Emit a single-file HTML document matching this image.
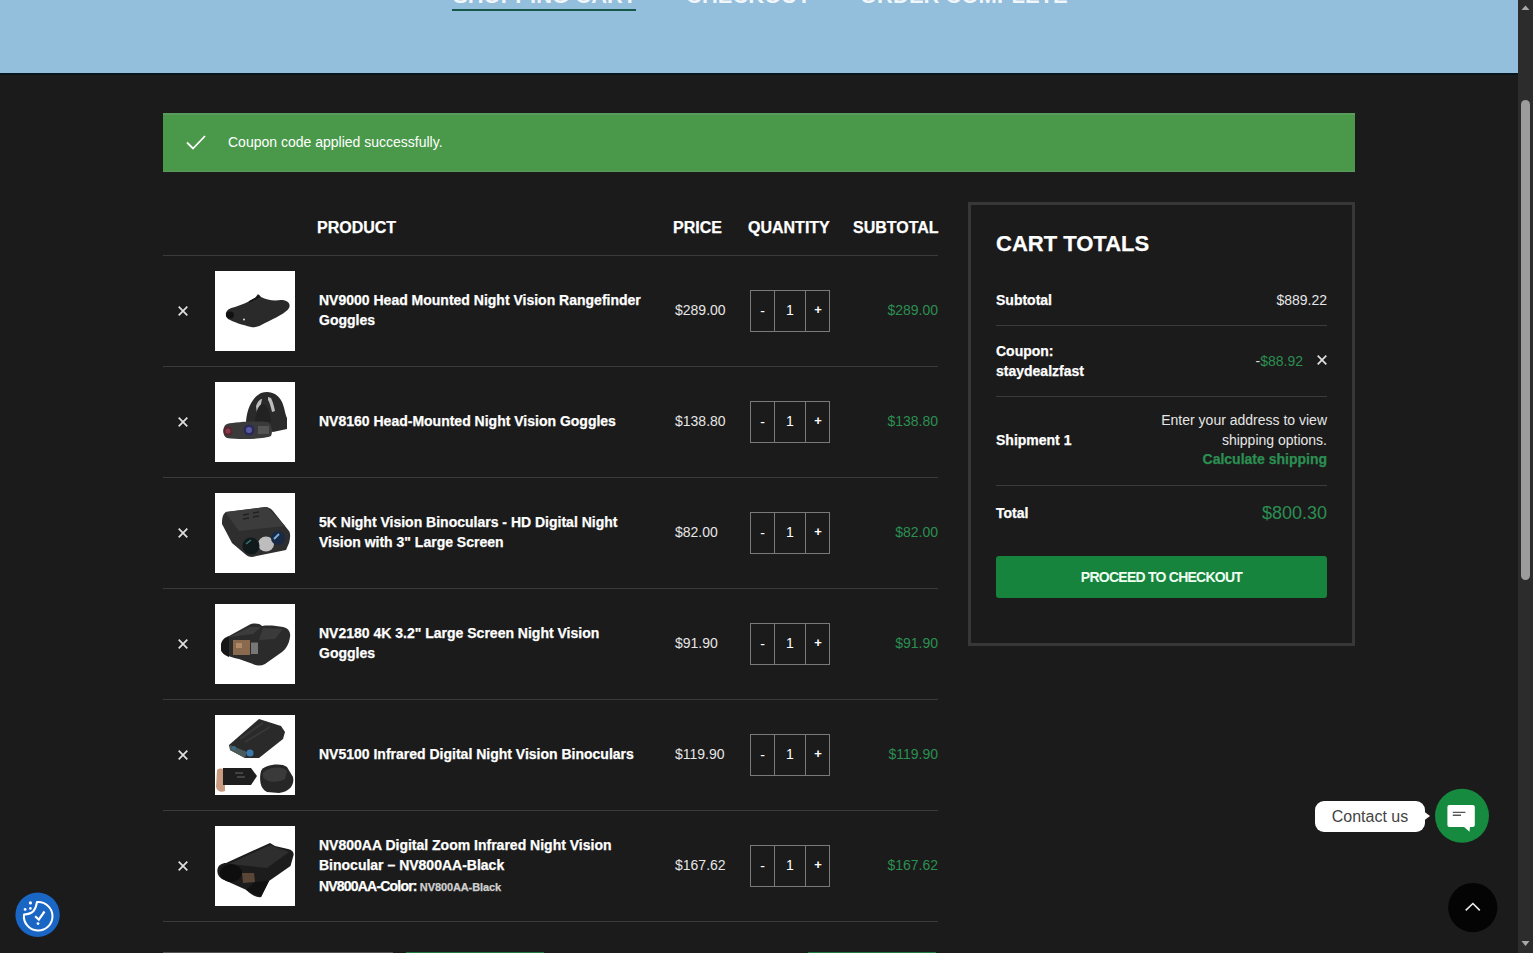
<!DOCTYPE html>
<html><head><meta charset="utf-8">
<style>
*{box-sizing:border-box;margin:0;padding:0}
html,body{width:1533px;height:953px;overflow:hidden}
body{background:#1b1b1b;font-family:"Liberation Sans",sans-serif;color:#fff;position:relative}
.abs{position:absolute}
.th,.row .name,.b{-webkit-text-stroke:0.25px currentColor}
#hdr{left:0;top:0;width:1518px;height:73px;background:#93bedc;overflow:hidden}
#hdr .st{position:absolute;top:-14px;font-size:22px;font-weight:bold;color:rgba(255,255,255,0.88);line-height:20px;white-space:nowrap}
#notice{left:163px;top:113px;width:1192px;height:59px;background:#4a994a;border-top:2px solid #5a9c5c;border-bottom:1px solid #5a9a5c}
#notice .txt{position:absolute;left:65px;top:17px;font-size:14px;line-height:20px;color:#fff}
.th{position:absolute;top:218px;font-size:16px;font-weight:bold;line-height:20px;white-space:nowrap}
.hl{position:absolute;left:163px;width:775px;height:1px;background:#3b3b3b}
.row{position:absolute;left:163px;width:775px;height:110px}
.row .x{position:absolute;left:14px;top:50px;width:12px;height:12px}
.row .img{position:absolute;left:52px;top:16px;width:80px;height:80px;background:#fff;overflow:hidden}
.row .name{position:absolute;left:156px;top:55px;transform:translateY(-50%);font-size:14px;font-weight:bold;line-height:20px;width:340px}
.row .price{position:absolute;left:512px;top:45px;font-size:14px;line-height:20px;color:#e6e6e6}
.row .qty{position:absolute;left:587px;top:35px;width:80px;height:42px;border:1px solid #7a7a7a}
.qty .d1{position:absolute;left:23px;top:0;width:1px;height:40px;background:#7a7a7a}
.qty .d2{position:absolute;left:54px;top:0;width:1px;height:40px;background:#7a7a7a}
.qty span{position:absolute;top:9px;font-size:14px;line-height:20px;text-align:center}
.row .sub{position:absolute;right:0;top:45px;font-size:14px;line-height:20px;color:#2b8f52}
#tot{left:968px;top:202px;width:387px;height:444px;border:3px solid #373737}
.tl{position:absolute;font-size:14px;line-height:20px;white-space:nowrap}
.b{font-weight:bold}
.g{color:#2b8f52}
.tline{position:absolute;left:996px;width:331px;height:1px;background:#3b3b3b}
#btn{left:996px;top:556px;width:331px;height:42px;background:#16843c;border-radius:3px;font-size:14px;font-weight:bold;letter-spacing:-0.75px;line-height:42px;text-align:center;color:#eefff2}
#contact{left:1315px;top:801px;width:110px;height:31px;background:#fff;border-radius:9px;color:#444;font-size:16px;line-height:31px;text-align:center}
#chat{left:1435px;top:789px;width:54px;height:54px;border-radius:50%;background:#168b3f}
#totop{left:1448px;top:883px;width:50px;height:50px;border-radius:50%;background:#050505}
#cookie{left:15px;top:893px;width:45px;height:45px;border-radius:50%;background:#1e69c2}
#sb{left:1518px;top:0;width:15px;height:953px;background:#2c2c2c}
#thumb{left:1521px;top:100px;width:9px;height:480px;background:#9c9c9c;border-radius:5px}
</style></head>
<body>
<div id="hdr" class="abs">
  <div class="st" style="left:453px">SHOPPING CART</div>
  <div class="st" style="left:686px">CHECKOUT</div>
  <div class="st" style="left:860px">ORDER COMPLETE</div>
  <div class="abs" style="left:452px;top:9px;width:184px;height:2px;background:#17574a"></div>
</div>

<div class="abs" style="left:0;top:73px;width:1518px;height:2px;background:#06161c"></div>
<div id="notice" class="abs">
  <svg class="abs" style="left:22px;top:19px" width="22" height="17" viewBox="0 0 22 17"><path d="M2 8.5 L8 14.5 L20 2" fill="none" stroke="#fff" stroke-width="1.8"/></svg>
  <div class="txt">Coupon code applied successfully.</div>
</div>

<div class="th" style="left:317px">PRODUCT</div>
<div class="th" style="left:673px">PRICE</div>
<div class="th" style="left:748px">QUANTITY</div>
<div class="th" style="left:853px">SUBTOTAL</div>

<div class="hl" style="top:255px"></div>
<div class="hl" style="top:366px"></div>
<div class="hl" style="top:477px"></div>
<div class="hl" style="top:588px"></div>
<div class="hl" style="top:699px"></div>
<div class="hl" style="top:810px"></div>
<div class="hl" style="top:921px"></div>

<!-- ROWS -->
<div class="row" style="top:255px">
  <svg class="x" viewBox="0 0 12 12"><path d="M1.7 1.7L10.3 10.3M10.3 1.7L1.7 10.3" stroke="#e0e0e0" stroke-width="1.7"/></svg>
  <div class="img"><svg width="80" height="80" viewBox="0 0 80 80"><rect width="80" height="80" fill="#fff"/>
<path d="M11 45 C10 40 14 37 20 36 C26 34 34 31 40 27 L43 23 L46 26 C52 29 58 30 66 29 C73 29 76 33 74 37 C71 42 60 47 50 52 C45 55 40 57 36 56 C28 54 18 51 13 48 Z" fill="#2a2a2a"/>
<path d="M34 31 L45 25" stroke="#111" stroke-width="1.5"/>
<ellipse cx="15" cy="44" rx="4" ry="3.5" fill="#111"/>
<circle cx="29" cy="48.5" r="1" fill="#ddd"/></svg></div>
  <div class="name">NV9000 Head Mounted Night Vision Rangefinder Goggles</div>
  <div class="price">$289.00</div>
  <div class="qty"><i class="d1"></i><i class="d2"></i><span style="left:0;width:23px;top:10px">-</span><span style="left:24px;width:30px">1</span><span style="left:55px;width:24px;font-size:13px;font-weight:bold">+</span></div>
  <div class="sub">$289.00</div>
</div>
<div class="row" style="top:366px">
  <svg class="x" viewBox="0 0 12 12"><path d="M1.7 1.7L10.3 10.3M10.3 1.7L1.7 10.3" stroke="#e0e0e0" stroke-width="1.7"/></svg>
  <div class="img"><svg width="80" height="80" viewBox="0 0 80 80"><rect width="80" height="80" fill="#fff"/>
<path d="M31 42 C31 30 36 16 46 11 C54 8 63 11 67 20 C70 27 70 32 72 36 L72 47 L58 50 Z" fill="#2a2a2a"/>
<path d="M41 24 C43 19 45 17 47 17 L45 27 C44 28 43 30 42 32 Z M53 15 L56 16 C58 20 59 24 60 29 L57 30 C56 26 55 21 53 18 Z" fill="#bdbdbd"/>
<path d="M47 22 C52 22 55 30 56 40 L40 41 C40 32 43 23 47 22 Z" fill="#222"/>
<path d="M12 42 C20 40 40 39 52 40 C57 41 58 50 56 54 C50 57 25 58 12 56 C7 54 7 44 12 42 Z" fill="#3a3a3a"/>
<circle cx="13" cy="49" r="4.5" fill="#5a2430"/><circle cx="13" cy="49" r="2.5" fill="#8a3a4a"/>
<circle cx="34" cy="48" r="5.5" fill="#2a2a5a"/><circle cx="34" cy="48" r="3" fill="#5a5aa0"/>
<rect x="43" y="44" width="11" height="8" fill="#555"/></svg></div>
  <div class="name">NV8160 Head-Mounted Night Vision Goggles</div>
  <div class="price">$138.80</div>
  <div class="qty"><i class="d1"></i><i class="d2"></i><span style="left:0;width:23px;top:10px">-</span><span style="left:24px;width:30px">1</span><span style="left:55px;width:24px;font-size:13px;font-weight:bold">+</span></div>
  <div class="sub">$138.80</div>
</div>
<div class="row" style="top:477px">
  <svg class="x" viewBox="0 0 12 12"><path d="M1.7 1.7L10.3 10.3M10.3 1.7L1.7 10.3" stroke="#e0e0e0" stroke-width="1.7"/></svg>
  <div class="img"><svg width="80" height="80" viewBox="0 0 80 80"><rect width="80" height="80" fill="#fff"/>
<path d="M7 31 C7 24 8 20 12 19 L50 14 C54 14 56 16 58 18 L74 38 C76 41 75 46 74 50 L71 57 L37 64 C34 64 32 63 30 61 L17 50 Z" fill="#2e2e2e"/>
<path d="M10 19 L52 14 L70 33 L24 38 Z" fill="#3c3c3c"/>
<path d="M28 22 L34 21 M38 20 L44 19 M28 26 L34 25 M38 24 L44 23" stroke="#222" stroke-width="1.5"/>
<ellipse cx="51" cy="51" rx="8" ry="7.5" fill="#bdbdbd"/>
<circle cx="36" cy="53" r="8.5" fill="#111a1a"/><path d="M31 51 L36 47" stroke="#3a7a7a" stroke-width="1.5"/>
<circle cx="63" cy="45" r="7" fill="#1a2a45"/><path d="M59 46 L64 41" stroke="#7ab0e0" stroke-width="1.8"/></svg></div>
  <div class="name">5K Night Vision Binoculars - HD Digital Night Vision with 3" Large Screen</div>
  <div class="price">$82.00</div>
  <div class="qty"><i class="d1"></i><i class="d2"></i><span style="left:0;width:23px;top:10px">-</span><span style="left:24px;width:30px">1</span><span style="left:55px;width:24px;font-size:13px;font-weight:bold">+</span></div>
  <div class="sub">$82.00</div>
</div>
<div class="row" style="top:588px">
  <svg class="x" viewBox="0 0 12 12"><path d="M1.7 1.7L10.3 10.3M10.3 1.7L1.7 10.3" stroke="#e0e0e0" stroke-width="1.7"/></svg>
  <div class="img"><svg width="80" height="80" viewBox="0 0 80 80"><rect width="80" height="80" fill="#fff"/>
<path d="M6 42 C6 36 10 33 14 32 L34 21 C38 19 44 19 47 22 C54 21 62 22 68 23 C73 24 76 28 75 33 C74 40 71 45 67 48 L50 60 C46 62 42 62 38 60 L24 55 C14 53 7 50 6 46 Z" fill="#2b2b2b"/>
<path d="M14 33 L35 23 L46 23 L38 30 Z" fill="#3c3c3c"/>
<path d="M48 24 L68 25 L60 35 L44 36 Z" fill="#3a3a3a"/>
<path d="M6 42 C6 37 10 34 14 33 L14 53 C9 51 6 48 6 45 Z" fill="#161616"/>
<rect x="18" y="36" width="17" height="15" fill="#8a6a4e"/>
<rect x="21" y="39" width="6" height="5" fill="#b08a66"/>
<rect x="36" y="38.5" width="7" height="11.5" fill="#777"/></svg></div>
  <div class="name">NV2180 4K 3.2" Large Screen Night Vision Goggles</div>
  <div class="price">$91.90</div>
  <div class="qty"><i class="d1"></i><i class="d2"></i><span style="left:0;width:23px;top:10px">-</span><span style="left:24px;width:30px">1</span><span style="left:55px;width:24px;font-size:13px;font-weight:bold">+</span></div>
  <div class="sub">$91.90</div>
</div>
<div class="row" style="top:699px">
  <svg class="x" viewBox="0 0 12 12"><path d="M1.7 1.7L10.3 10.3M10.3 1.7L1.7 10.3" stroke="#e0e0e0" stroke-width="1.7"/></svg>
  <div class="img"><svg width="80" height="80" viewBox="0 0 80 80"><rect width="80" height="80" fill="#fff"/>
<path d="M14 30 L44 4 L66 11 L70 17 L68 24 L44 43 L30 43 L15 35 Z" fill="#2a2a2a"/>
<path d="M15 30 L32 37 L30 43 L15 35 Z" fill="#4a5a5a"/>
<path d="M25 24 L48 8 M30 27 L55 12" stroke="#383838" stroke-width="2"/>
<circle cx="35" cy="38" r="3.5" fill="#3a7ab0"/><circle cx="19" cy="33" r="2" fill="#3a6a8a"/>
<path d="M2 55 C6 52 10 54 10 58 L10 76 C6 78 2 76 1 72 Z" fill="#c89a80"/>
<path d="M8 53 L36 53 L42 61 L36 70 L8 70 Z" fill="#1e1e1e"/>
<path d="M20 58 L28 58 M22 62 L30 62" stroke="#666" stroke-width="1"/>
<path d="M46 56 C48 50 66 47 72 52 L78 62 C80 70 74 77 64 78 L52 77 C45 74 44 64 46 56 Z" fill="#262626"/>
<path d="M48 58 C52 52 68 50 72 56 L70 64 C64 68 52 68 48 62 Z" fill="#3a3a3a"/></svg></div>
  <div class="name">NV5100 Infrared Digital Night Vision Binoculars</div>
  <div class="price">$119.90</div>
  <div class="qty"><i class="d1"></i><i class="d2"></i><span style="left:0;width:23px;top:10px">-</span><span style="left:24px;width:30px">1</span><span style="left:55px;width:24px;font-size:13px;font-weight:bold">+</span></div>
  <div class="sub">$119.90</div>
</div>
<div class="row" style="top:810px">
  <svg class="x" viewBox="0 0 12 12"><path d="M1.7 1.7L10.3 10.3M10.3 1.7L1.7 10.3" stroke="#e0e0e0" stroke-width="1.7"/></svg>
  <div class="img"><svg width="80" height="80" viewBox="0 0 80 80"><rect width="80" height="80" fill="#fff"/>
<path d="M2.4 44 C3 39 7 37 11 37 L55 17 L60 20 L73 23 C77 24 79 26 78.6 29 L75.5 40 L54 55 L46 71 C42 72 36 69 31.5 64 L7 53 C4 51 2 48 2.4 44 Z" fill="#1c1c1c"/>
<path d="M14 38 L55 19 L74 26 L52 42 Z" fill="#2e2e2e"/>
<ellipse cx="16" cy="47" rx="11" ry="9" fill="#0e0e0e"/>
<path d="M27 47 L39 47 L40 56 L28 57 Z" fill="#5a4636"/>
<path d="M31 64 L46 71 L54 55 L40 56 Z" fill="#111"/></svg></div>
  <div class="name" style="top:25px;transform:none">NV800AA Digital Zoom Infrared Night Vision Binocular – NV800AA-Black<div style="margin-top:1px;letter-spacing:-0.8px">NV800AA-Color: <span style="font-size:11px;color:#cfcfcf;letter-spacing:-0.1px">NV800AA-Black</span></div></div>
  <div class="price">$167.62</div>
  <div class="qty"><i class="d1"></i><i class="d2"></i><span style="left:0;width:23px;top:10px">-</span><span style="left:24px;width:30px">1</span><span style="left:55px;width:24px;font-size:13px;font-weight:bold">+</span></div>
  <div class="sub">$167.62</div>
</div>

<!-- bottom hints -->
<div class="abs" style="left:163px;top:952px;width:230px;height:1px;background:#555"></div>
<div class="abs" style="left:406px;top:952px;width:138px;height:1px;background:#1f7a3e"></div>
<div class="abs" style="left:808px;top:952px;width:128px;height:1px;background:#1f7a3e"></div>

<!-- TOTALS -->
<div id="tot" class="abs"></div>
<div class="abs b" style="left:996px;top:230px;font-size:22px;line-height:28px">CART TOTALS</div>

<div class="tl b" style="left:996px;top:290px">Subtotal</div>
<div class="tl" style="right:206px;top:290px;color:#e6e6e6">$889.22</div>
<div class="tline" style="top:325px"></div>

<div class="tl b" style="left:996px;top:341px">Coupon:<br>staydealzfast</div>
<div class="tl g" style="right:230px;top:351px"><span style="color:#ddd">-</span>$88.92</div>
<svg class="abs" style="left:1316px;top:354px" width="12" height="12" viewBox="0 0 12 12"><path d="M1.7 1.7L10.3 10.3M10.3 1.7L1.7 10.3" stroke="#e0e0e0" stroke-width="1.7"/></svg>
<div class="tline" style="top:396px"></div>

<div class="tl b" style="left:996px;top:430px">Shipment 1</div>
<div class="tl" style="right:206px;top:410px;text-align:right;color:#e6e6e6">Enter your address to view<br>shipping options.</div>
<div class="tl b g" style="right:206px;top:449px">Calculate shipping</div>
<div class="tline" style="top:485px"></div>

<div class="tl b" style="left:996px;top:503px">Total</div>
<div class="tl g" style="right:206px;top:502px;font-size:18px;line-height:22px">$800.30</div>

<div id="btn" class="abs">PROCEED TO CHECKOUT</div>

<!-- floating -->
<div id="contact" class="abs">Contact us</div>
<svg class="abs" style="left:1422px;top:810px" width="10" height="12" viewBox="0 0 10 12"><path d="M0 0 L8 6 L0 12 Z" fill="#fff"/></svg>
<svg class="abs" style="left:1432px;top:786px" width="60" height="60" viewBox="0 0 60 60">
  <circle cx="30" cy="29.8" r="27" fill="#168a3e"/>
  <path d="M17.4 18.9 H40.8 Q42.8 18.9 42.8 20.9 V38.9 Q42.8 40.9 40.8 40.9 H38 L37.5 45.7 L32.1 40.9 H17.4 Q15.4 40.9 15.4 38.9 V20.9 Q15.4 18.9 17.4 18.9 Z" fill="#fff"/>
  <path d="M20.8 26.4 H33.4 M20.8 29.3 H29" stroke="#555" stroke-width="1.4"/>
</svg>
<svg class="abs" style="left:1443px;top:878px" width="60" height="60" viewBox="0 0 60 60">
  <circle cx="29.8" cy="29.6" r="24.6" fill="#040404"/>
  <path d="M22.7 32.4 L29.9 25.5 L36.8 32.4" fill="none" stroke="#eee" stroke-width="1.6"/>
</svg>
<svg class="abs" style="left:12px;top:890px" width="50" height="50" viewBox="0 0 50 50">
  <circle cx="25.6" cy="24.8" r="22.2" fill="#1a66c4"/>
  <path d="M25 12 A14.3 14.3 0 1 1 12 24.5 Q19 24 21.5 21 Q24 18 25 12 Z" fill="none" stroke="#fff" stroke-width="2" stroke-linejoin="round"/>
  <circle cx="18.4" cy="12.9" r="1.6" fill="#fff"/>
  <circle cx="13.1" cy="19.4" r="1.4" fill="#fff"/>
  <circle cx="18.4" cy="18.4" r="1.3" fill="#fff"/>
  <path d="M23.1 26.2 L26.8 29.6 L32.5 21.5" fill="none" stroke="#fff" stroke-width="2.2"/>
  <circle cx="26" cy="33.6" r="1.4" fill="#fff"/>
</svg>

<div id="sb" class="abs"></div>
<div id="thumb" class="abs"></div>
<svg class="abs" style="left:1518px;top:0px" width="15" height="15" viewBox="0 0 15 15"><path d="M3.5 10 L7.5 5.5 L11.5 10 Z" fill="#a8a8a8"/></svg>
<svg class="abs" style="left:1518px;top:938px" width="15" height="15" viewBox="0 0 15 15"><path d="M3.5 3 L7.5 8 L11.5 3 Z" fill="#a8a8a8"/></svg>
</body></html>
